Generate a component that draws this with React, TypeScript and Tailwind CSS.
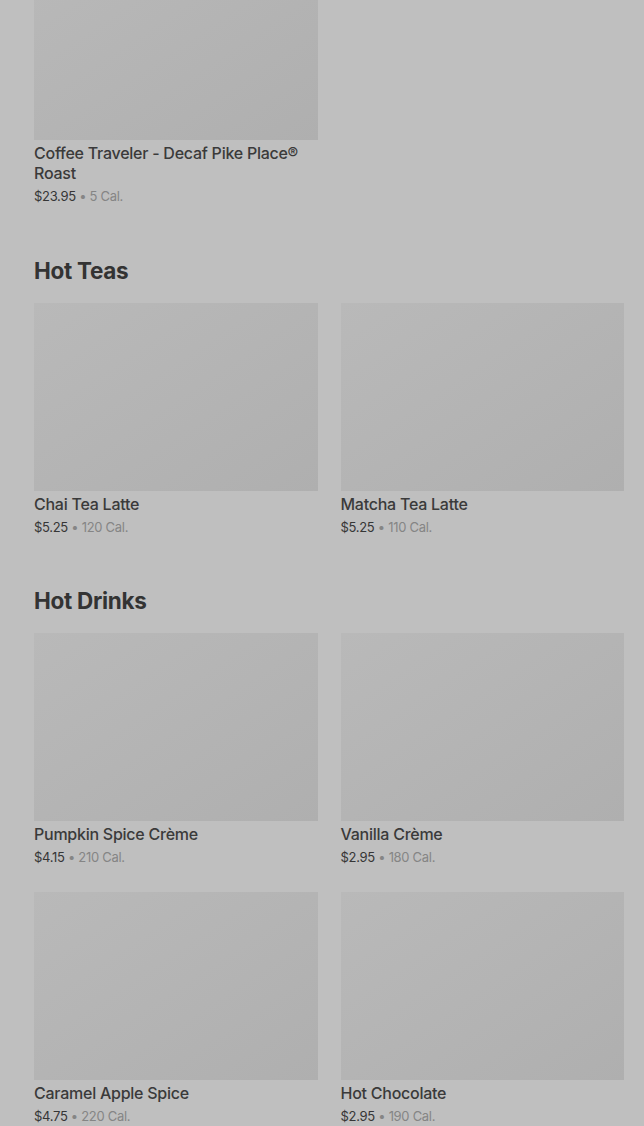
import React from 'react';

type Item = { name: string; price: string; cal: string };

const sections: { title: string | null; items: Item[] }[] = [
  { title: null, items: [{ name: 'Coffee Traveler - Decaf Pike Place® Roast', price: '$23.95', cal: '5 Cal.' }] },
  {
    title: 'Hot Teas',
    items: [
      { name: 'Chai Tea Latte', price: '$5.25', cal: '120 Cal.' },
      { name: 'Matcha Tea Latte', price: '$5.25', cal: '110 Cal.' },
    ],
  },
  {
    title: 'Hot Drinks',
    items: [
      { name: 'Pumpkin Spice Crème', price: '$4.15', cal: '210 Cal.' },
      { name: 'Vanilla Crème', price: '$2.95', cal: '180 Cal.' },
      { name: 'Caramel Apple Spice', price: '$4.75', cal: '220 Cal.' },
      { name: 'Hot Chocolate', price: '$2.95', cal: '190 Cal.' },
    ],
  },
];

function ItemCard({ item }: { item: Item }) {
  return (
    <div className="flex flex-col">
      <div className="h-[188px] w-full bg-gradient-to-br from-[#b9b9b9] to-[#afafaf]" />
      <div className="mt-[3px] text-[16px] leading-[20px] font-medium tracking-[-0.25px] text-[#3a3a3a]">{item.name}</div>
      <div className="mt-[3px] text-[13px] leading-[20px] tracking-[-0.3px] text-[#363636]">
        {item.price} <span className="text-[#858585]">• {item.cal}</span>
      </div>
    </div>
  );
}

export default function App() {
  return (
    <div className="min-h-screen bg-[#bfbfbf] overflow-hidden font-['Inter',sans-serif]">
      <div className="-mt-[48px] pl-[34px] pr-[20px]">
        {sections.map((s, i) => (
          <section key={i} className={i === 0 ? '' : i === 1 ? 'mt-[51px]' : 'mt-[50px]'}>
            {s.title && (
              <h2 className="mb-[18px] text-[22.5px] leading-[28px] font-bold tracking-[-0.3px] text-[#333333]">{s.title}</h2>
            )}
            <div className="grid grid-cols-2 gap-x-[23px] gap-y-[25px]">
              {s.items.map(it => (
                <ItemCard key={it.name} item={it} />
              ))}
            </div>
          </section>
        ))}
      </div>
    </div>
  );
}
